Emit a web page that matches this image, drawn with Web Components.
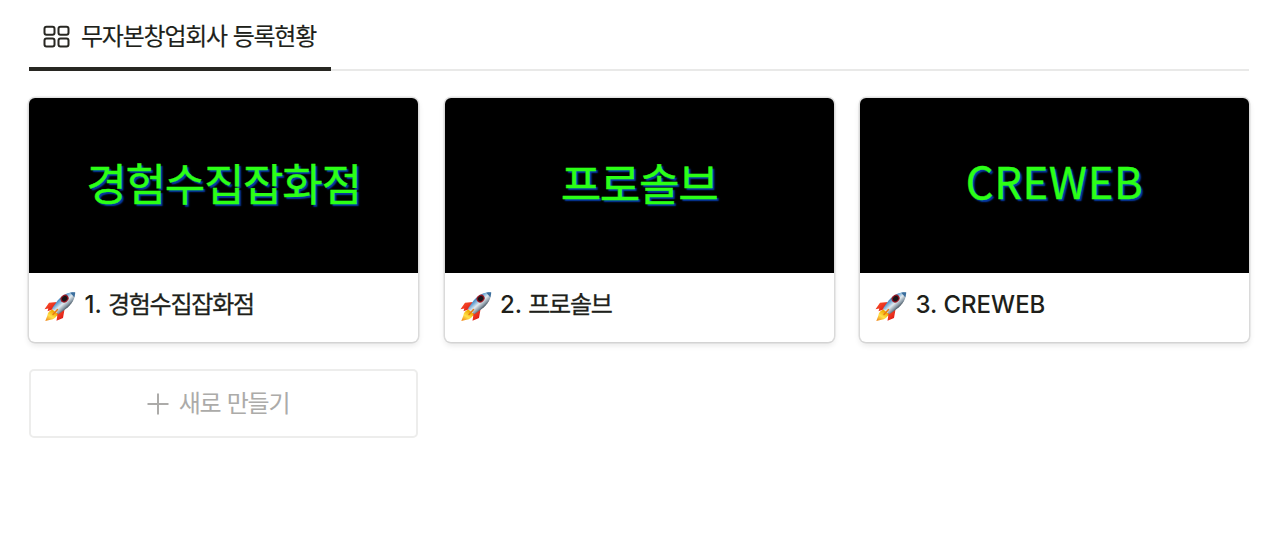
<!DOCTYPE html>
<html lang="ko"><head><meta charset="utf-8"><title>무자본창업회사 등록현황</title>
<style>
html,body{margin:0;background:#fff}
body{color:#201f1a;font-family:Inter,"Noto Sans CJK KR",sans-serif}
</style></head><body>
<gallery-page></gallery-page>
<script>
const define = (name, html) => {
  const t = document.createElement('template');
  t.innerHTML = html;
  customElements.define(name, class extends HTMLElement {
    constructor() {
      super();
      this.attachShadow({mode: 'open'}).append(t.content.cloneNode(true));
    }
  });
};

define('rocket-icon', `
<style>:host{display:block;width:32px;height:32px}svg{display:block}</style>
<svg width="32" height="32" viewBox="0 0 32 32">
  <defs>
    <linearGradient id="b" x1="12" y1="7" x2="22" y2="18" gradientUnits="userSpaceOnUse"><stop offset="0" stop-color="#1f5c94"/><stop offset=".3" stop-color="#5f9fd2"/><stop offset=".6" stop-color="#e3eaee"/><stop offset=".85" stop-color="#8b9ba8"/><stop offset="1" stop-color="#47545f"/></linearGradient>
    <linearGradient id="f" x1="9" y1="20" x2="3" y2="30" gradientUnits="userSpaceOnUse"><stop offset="0" stop-color="#f0a800"/><stop offset=".5" stop-color="#ffe14a"/><stop offset="1" stop-color="#f28a18"/></linearGradient>
    <linearGradient id="r" x1="0" y1="0" x2="1" y2="1"><stop offset="0" stop-color="#ff5a2c"/><stop offset="1" stop-color="#d80d12"/></linearGradient>
  </defs>
  <path d="M13 11 5 11.700.5 18.200l3.800-.7-.8 2.800 6-2.300z" fill="url(#r)"/>
  <path d="M20.500 18.500 19 27l-6.500 2.700.8-5.100-2.500.7 2.800-5z" fill="url(#r)"/>
  <path d="M8.500 18.500c-3 .8-4.800 3.200-5.200 6.200L1.300 30l5.300-1.200c3.300-.4 6-2.400 7-5.800z" fill="url(#f)"/>
  <path d="M31.200 1.200C25 .8 18.700 3.400 13.800 9.300L8 17.600l6.400 5.700 7.300-5.200C28 13 31.300 7.500 31.200 1.200z" fill="url(#b)"/>
  <path d="M26.200 1.700c1.700-.5 3.400-.6 5-.5 0 1.700-.3 3.400-.9 5z" fill="#3c6f9e"/>
  <ellipse cx="20.600" cy="7.600" rx="4.200" ry="3.600" transform="rotate(-38 20.600 7.600)" fill="#9b1824"/>
  <ellipse cx="20.600" cy="7.600" rx="2.900" ry="2.500" transform="rotate(-38 20.600 7.600)" fill="#191419"/>
  <path d="m13.500 18.500-4.500 5" stroke="#e87a18" stroke-width="1.500" stroke-linecap="round"/>
</svg>`);

define('view-tab', `
<style>
:host{display:flex;align-items:flex-start;box-sizing:border-box;width:302px;height:71px;padding:23px 0 0 14px;border-bottom:4px solid #282722}
svg{display:block;margin:2px 11px 0 0}
span{font:400 24px/24px "Noto Sans CJK KR",sans-serif;letter-spacing:-1.230px;word-spacing:.200px;white-space:nowrap;-webkit-text-stroke:.15px}
</style>
<svg width="27" height="23" viewBox="0 0 27 23" fill="none" stroke="#282722" stroke-width="2"><rect x="1.500" y="1.700" width="10" height="8" rx="2"/><rect x="15.500" y="1.700" width="10" height="8" rx="2"/><rect x="1.500" y="13.500" width="10" height="8" rx="2"/><rect x="15.500" y="13.500" width="10" height="8" rx="2"/></svg>
<span><slot></slot></span>`);

define('company-card', `
<style>
:host{display:block;height:244px;border-radius:6px;background:#fff;overflow:hidden;box-shadow:0 0 0 1.500px rgba(15,15,15,.11),0 3px 6px rgba(15,15,15,.11)}
.cover{display:flex;align-items:center;justify-content:center;box-sizing:border-box;height:175px;padding-bottom:var(--cover-lift,7px);background:#000;color:#2cff16;font:400 var(--cover-size,44px)/60px "Noto Sans CJK KR",sans-serif;letter-spacing:var(--cover-spacing,-1.300px);text-shadow:2px 2px 1.500px #063ba8;white-space:nowrap;-webkit-text-stroke:.4px}
.title{display:flex;align-items:flex-start;padding:18px 15px 0}
.name{display:flex;margin:-1px 0 0 8.500px;font:500 24px/30px Inter,"Noto Sans CJK KR",sans-serif;white-space:pre}
</style>
<div class="cover"><slot name="cover"></slot></div>
<div class="title"><rocket-icon></rocket-icon><div class="name"><slot></slot></div></div>`);

define('new-button', `
<style>
:host{display:flex;align-items:center;justify-content:center;box-sizing:border-box;height:69px;border:2px solid #ededec;border-radius:5px;color:#acaba9;padding-right:11px}
svg{display:block;margin:0 10px 0 0}
span{font:400 24px/34px "Noto Sans CJK KR",sans-serif;letter-spacing:-1.200px;word-spacing:.700px;padding-bottom:3px}
</style>
<svg width="22" height="22" viewBox="0 0 22 22" stroke="#acaba9" stroke-width="2"><path d="M11 .5v21M.5 11h21"/></svg><span><slot></slot></span>`);

define('gallery-page', `
<style>
:host{display:block;height:556px;box-sizing:border-box;padding:0 31px 0 29px;overflow:hidden}
header{display:flex;height:71px;box-shadow:inset 0 -2px #e9e9e8}
main{display:grid;grid-template-columns:repeat(3,389px);justify-content:space-between;row-gap:27px;padding-top:27px}
.k{font:400 24px/25px "Noto Sans CJK KR",sans-serif;letter-spacing:-1.230px;-webkit-text-stroke:.3px}
</style>
<header><view-tab>무자본창업회사 등록현황</view-tab></header>
<main>
<company-card><span slot="cover">경험수집잡화점</span>1. <span class="k">경험수집잡화점</span></company-card>
<company-card><span slot="cover">프로솔브</span>2. <span class="k">프로솔브</span></company-card>
<company-card style="--cover-size:43.500px;--cover-spacing:.7px;--cover-lift:10px"><span slot="cover">CREWEB</span>3. CREWEB</company-card>
<new-button>새로 만들기</new-button>
</main>`);
</script></body></html>
